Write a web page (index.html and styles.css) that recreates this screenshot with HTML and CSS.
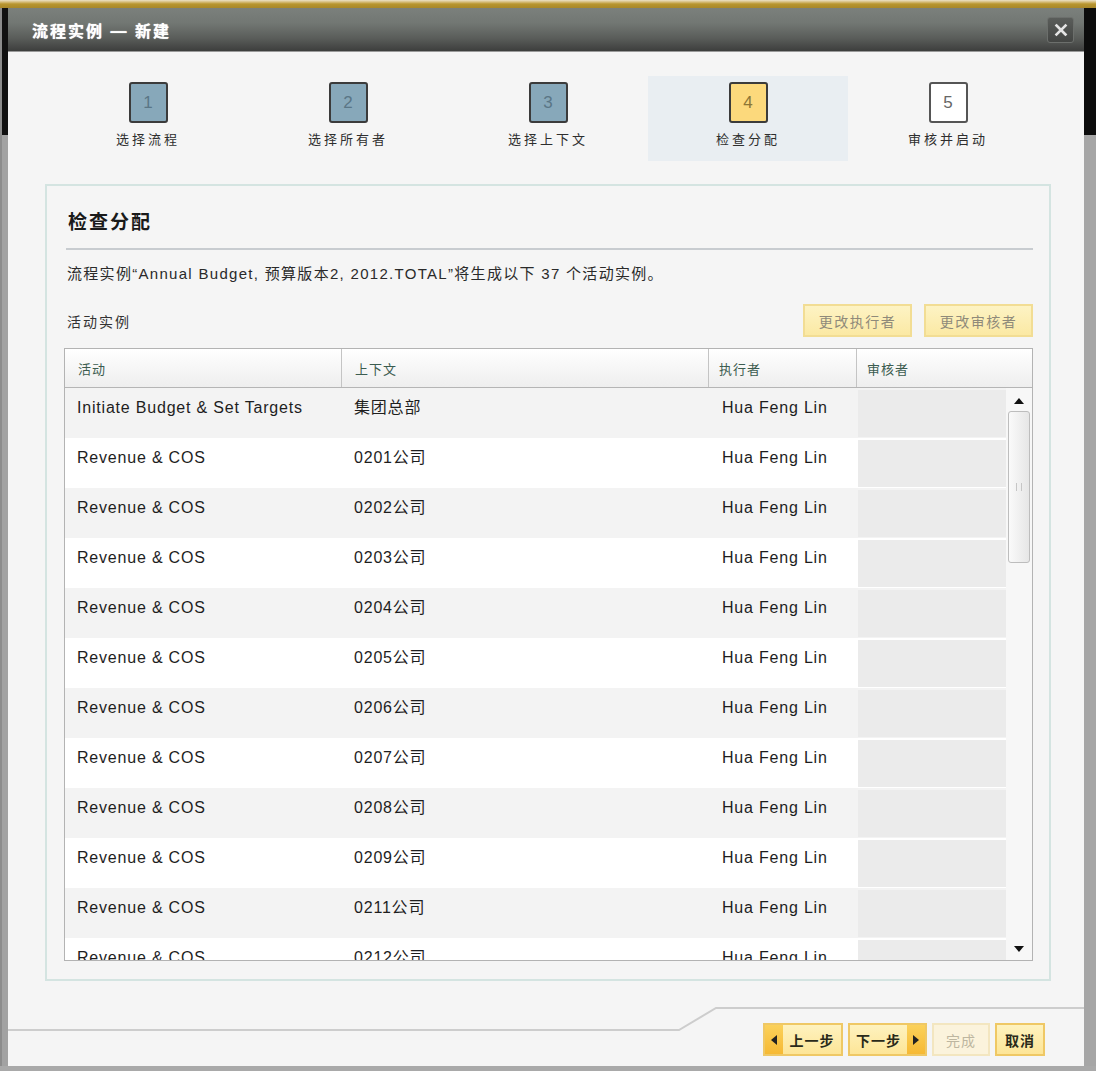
FILE: index.html
```html
<!DOCTYPE html>
<html lang="zh-CN">
<head>
<meta charset="utf-8">
<title>流程实例 — 新建</title>
<link rel="stylesheet" href="styles.css">
</head>
<body>
<div class="screen">
  <div class="goldbar"></div>
  <div class="frame">
    <div class="edge edge-left"></div>
    <div class="dialog">
      <div class="titlebar">
        <span class="title">流程实例 — 新建</span>
        <button class="close" type="button" aria-label="关闭">
          <svg width="14" height="14" viewBox="0 0 14 14"><path d="M2.5 2.5 L11.5 11.5 M11.5 2.5 L2.5 11.5" stroke="#e4e4e4" stroke-width="2.6" stroke-linecap="square"/></svg>
        </button>
      </div>
      <div class="body">
        <div class="steps">
          <div class="step done"><div class="num">1</div><div class="label">选择流程</div></div>
          <div class="step done"><div class="num">2</div><div class="label">选择所有者</div></div>
          <div class="step done"><div class="num">3</div><div class="label">选择上下文</div></div>
          <div class="step current"><div class="num">4</div><div class="label">检查分配</div></div>
          <div class="step todo"><div class="num">5</div><div class="label">审核并启动</div></div>
        </div>
        <div class="panel">
          <div class="panel-title">检查分配</div>
          <div class="desc">流程实例“Annual Budget, 预算版本2, 2012.TOTAL”将生成以下 37 个活动实例。</div>
          <div class="toolbar">
            <span class="sub">活动实例</span>
            <div class="tools">
              <button class="tbtn" type="button">更改执行者</button>
              <button class="tbtn" type="button">更改审核者</button>
            </div>
          </div>
          <div class="table">
            <div class="thead">
              <div class="th">活动</div>
              <div class="th">上下文</div>
              <div class="th th-narrow">执行者</div>
              <div class="th th-narrow">审核者</div>
            </div>
            <div class="tbody">
              <div class="rows">
                <div class="row"><div class="td">Initiate Budget &amp; Set Targets</div><div class="td">集团总部</div><div class="td td-3">Hua Feng Lin</div><div class="rev"></div></div>
                <div class="row"><div class="td">Revenue &amp; COS</div><div class="td">0201公司</div><div class="td td-3">Hua Feng Lin</div><div class="rev"></div></div>
                <div class="row"><div class="td">Revenue &amp; COS</div><div class="td">0202公司</div><div class="td td-3">Hua Feng Lin</div><div class="rev"></div></div>
                <div class="row"><div class="td">Revenue &amp; COS</div><div class="td">0203公司</div><div class="td td-3">Hua Feng Lin</div><div class="rev"></div></div>
                <div class="row"><div class="td">Revenue &amp; COS</div><div class="td">0204公司</div><div class="td td-3">Hua Feng Lin</div><div class="rev"></div></div>
                <div class="row"><div class="td">Revenue &amp; COS</div><div class="td">0205公司</div><div class="td td-3">Hua Feng Lin</div><div class="rev"></div></div>
                <div class="row"><div class="td">Revenue &amp; COS</div><div class="td">0206公司</div><div class="td td-3">Hua Feng Lin</div><div class="rev"></div></div>
                <div class="row"><div class="td">Revenue &amp; COS</div><div class="td">0207公司</div><div class="td td-3">Hua Feng Lin</div><div class="rev"></div></div>
                <div class="row"><div class="td">Revenue &amp; COS</div><div class="td">0208公司</div><div class="td td-3">Hua Feng Lin</div><div class="rev"></div></div>
                <div class="row"><div class="td">Revenue &amp; COS</div><div class="td">0209公司</div><div class="td td-3">Hua Feng Lin</div><div class="rev"></div></div>
                <div class="row"><div class="td">Revenue &amp; COS</div><div class="td">0211公司</div><div class="td td-3">Hua Feng Lin</div><div class="rev"></div></div>
                <div class="row"><div class="td">Revenue &amp; COS</div><div class="td">0212公司</div><div class="td td-3">Hua Feng Lin</div><div class="rev"></div></div>
                <div class="row"><div class="td">Revenue &amp; COS</div><div class="td">0213公司</div><div class="td td-3">Hua Feng Lin</div><div class="rev"></div></div>
              </div>
              <div class="scrollbar">
                <svg class="arrow" width="10" height="6" viewBox="0 0 10 6"><path d="M0 6 L5 0 L10 6 Z" fill="#111"/></svg>
                <div class="thumb"><span class="grip"></span></div>
                <div class="track"></div>
                <svg class="arrow" width="10" height="6" viewBox="0 0 10 6"><path d="M0 0 L5 6 L10 0 Z" fill="#111"/></svg>
              </div>
            </div>
          </div>
        </div>
      </div>
      <div class="footer">
        <svg class="footer-line" width="1076" height="85" viewBox="0 0 1076 85"><path d="M0 49 H671 L708 27 H1076" fill="none" stroke="#cdcdcd" stroke-width="2"/></svg>
        <div class="actions">
          <button class="btn btn-prev" type="button"><span class="seg"><svg width="6" height="10" viewBox="0 0 6 10"><path d="M6 0 L0 5 L6 10 Z" fill="#222"/></svg></span><span class="txt">上一步</span></button>
          <button class="btn btn-next" type="button"><span class="txt">下一步</span><span class="seg"><svg width="6" height="10" viewBox="0 0 6 10"><path d="M0 0 L6 5 L0 10 Z" fill="#222"/></svg></span></button>
          <button class="btn btn-disabled" type="button">完成</button>
          <button class="btn btn-cancel" type="button">取消</button>
        </div>
      </div>
    </div>
    <div class="edge edge-right"></div>
  </div>
  <div class="bottombar"></div>
</div>
</body>
</html>
```

FILE: styles.css
```css
* { box-sizing: border-box; }
html, body { margin: 0; padding: 0; }
body {
  width: 1096px;
  height: 1071px;
  overflow: hidden;
  background: #a3a3a3;
  font-family: "Liberation Sans", "Noto Sans CJK SC", sans-serif;
  color: #222;
}
button { font-family: inherit; cursor: default; }

.screen { display: flex; flex-direction: column; height: 1071px; }
.goldbar {
  height: 8px;
  background: linear-gradient(#ece2c8 0, #d6bd7c 2px, #b8952f 4px, #a8872a 8px);
}
.frame { display: flex; height: 1058px; }
.edge-left {
  width: 8px;
  background:
    linear-gradient(to right, #8c8c8c 0 2px, transparent 2px),
    linear-gradient(#111 0 127px, #a2a2a2 127px);
}
.edge-right {
  width: 12px;
  background: linear-gradient(#0c0c0c 0 127px, #a6a6a6 127px);
}
.bottombar { height: 5px; background: #a9a9a9; }

.dialog {
  width: 1076px;
  display: flex;
  flex-direction: column;
  background: #f5f5f5;
}

/* title bar */
.titlebar {
  height: 44px;
  display: flex;
  align-items: center;
  justify-content: space-between;
  padding: 0 10px 0 24px;
  background: linear-gradient(#7b807c 0, #727773 35%, #5a5d5a 70%, #3d3e3d 100%);
  border-bottom: 1px solid #9a9a9a;
}
.title {
  color: #fff;
  font-size: 16px;
  font-weight: bold;
  letter-spacing: 2px;
  text-shadow: 0 0 1px #fff;
}
.close {
  width: 27px;
  height: 26px;
  padding: 0;
  display: flex;
  align-items: center;
  justify-content: center;
  background: linear-gradient(#5a5d5a, #434543);
  border: 1px solid #6c6f6c;
  border-radius: 3px;
}

/* steps */
.body { display: flex; flex-direction: column; }
.steps {
  display: grid;
  grid-template-columns: repeat(5, 200px);
  margin: 24px 0 0 40px;
  height: 85px;
}
.step {
  display: flex;
  flex-direction: column;
  align-items: center;
  padding-top: 6px;
}
.step.current { background: #e9eef2; }
.num {
  width: 39px;
  height: 41px;
  border: 2px solid #3b3b3b;
  border-radius: 3px;
  display: flex;
  align-items: center;
  justify-content: center;
  font-size: 17px;
}
.done .num { background: #87a8ba; color: #5a7686; }
.current .num { background: #fcd97c; color: #8c7636; }
.todo .num { background: #fff; color: #666; border-color: #555; }
.label {
  margin-top: 8px;
  font-size: 13px;
  line-height: 18px;
  letter-spacing: 3px;
  color: #2e2e2e;
}

/* panel */
.panel {
  height: 797px;
  margin: 23px 33px 0 37px;
  border: 2px solid #d4e4e1;
  padding: 0 16px 0 17px;
  display: flex;
  flex-direction: column;
}
.panel-title {
  margin-top: 24px;
  padding-left: 4px;
  height: 26px;
  line-height: 26px;
  font-size: 19px;
  font-weight: bold;
  letter-spacing: 2px;
  color: #1a1a1a;
}
.panel-title::after {
  content: "";
  display: block;
  margin: 12px 0 0 -2px;
  height: 2px;
  background: #c8ccd0;
}
.desc {
  margin-top: 28px;
  padding-left: 3px;
  font-size: 15px;
  line-height: 20px;
  letter-spacing: 1.3px;
  color: #2a2a2a;
}
.toolbar {
  margin-top: 20px;
  height: 33px;
  display: flex;
  align-items: center;
  justify-content: space-between;
}
.sub {
  padding-left: 3px;
  font-size: 14px;
  letter-spacing: 2px;
  color: #333;
}
.tools { display: flex; gap: 12px; }
.tbtn {
  width: 109px;
  height: 33px;
  padding: 0;
  background: linear-gradient(#fdf3c4, #fbe9a4);
  border: 2px solid #f2dd94;
  font-size: 14px;
  letter-spacing: 1.5px;
  color: #8f8a7a;
}

/* table */
.table {
  margin-top: 11px;
  width: 969px;
  border: 1px solid #b3b3b3;
  background: #fff;
}
.thead {
  display: grid;
  grid-template-columns: 277px 367px 148px 175px;
  height: 39px;
  background: linear-gradient(#ffffff, #eeeeee);
  border-bottom: 1px solid #b5b5b5;
}
.th {
  display: flex;
  align-items: center;
  padding-left: 13px;
  font-size: 13px;
  letter-spacing: 1px;
  color: #3c5c50;
  border-right: 1px solid #c4c4c4;
}
.th-narrow { padding-left: 10px; }
.th:last-child { border-right: 0; }
.tbody {
  display: flex;
  height: 572px;
  overflow: hidden;
}
.rows { width: 941px; overflow: hidden; }
.row {
  display: grid;
  grid-template-columns: 277px 367px 148px 149px;
  height: 50px;
  background: #fff;
}
.row:nth-child(odd) { background: #f3f3f3; }
.td {
  padding: 11px 0 0 12px;
  font-size: 16px;
  line-height: 18px;
  letter-spacing: 0.8px;
  color: #1e1e1e;
  white-space: nowrap;
}
.td-3 { padding-left: 13px; }
.rev {
  background: #ebebeb;
  margin: 2px 0 1px 1px;
}
.scrollbar {
  width: 26px;
  display: flex;
  flex-direction: column;
  align-items: center;
  background: #f7f7f7;
  padding: 10px 0 8px;
}
.arrow { flex: none; }
.thumb {
  margin-top: 7px;
  width: 22px;
  height: 152px;
  border: 1px solid #bdbdbd;
  border-radius: 3px;
  background: linear-gradient(to right, #fafafa, #e6e6e6);
  display: flex;
  align-items: center;
  justify-content: center;
}
.grip {
  width: 6px;
  height: 8px;
  border-left: 1px solid #c6c6c6;
  border-right: 1px solid #c6c6c6;
}
.track { flex: 1; }

/* footer */
.footer {
  flex: 1;
  position: relative;
  display: flex;
  justify-content: flex-end;
  padding: 42px 39px 0 0;
}
.footer-line { position: absolute; left: 0; top: 0; }
.actions { position: relative; display: flex; gap: 5px; height: 33px; }
.btn {
  height: 33px;
  padding: 0;
  display: flex;
  align-items: stretch;
  border: 2px solid #efc865;
  background: linear-gradient(#fef2bf, #fde597);
  font-size: 14px;
  font-weight: bold;
  letter-spacing: 1px;
  color: #2a2a1a;
}
.btn .seg {
  width: 18px;
  display: flex;
  align-items: center;
  justify-content: center;
  background: linear-gradient(#fbd15a, #f6b934);
}
.btn .txt { flex: 1; display: flex; align-items: center; justify-content: center; }
.btn-prev { width: 80px; }
.btn-next { width: 79px; }
.btn-disabled {
  width: 58px;
  align-items: center;
  justify-content: center;
  background: #fbf3dc;
  border-color: #f3e6c0;
  color: #bdb6a0;
  font-weight: normal;
}
.btn-cancel { width: 50px; align-items: center; justify-content: center; }
```
